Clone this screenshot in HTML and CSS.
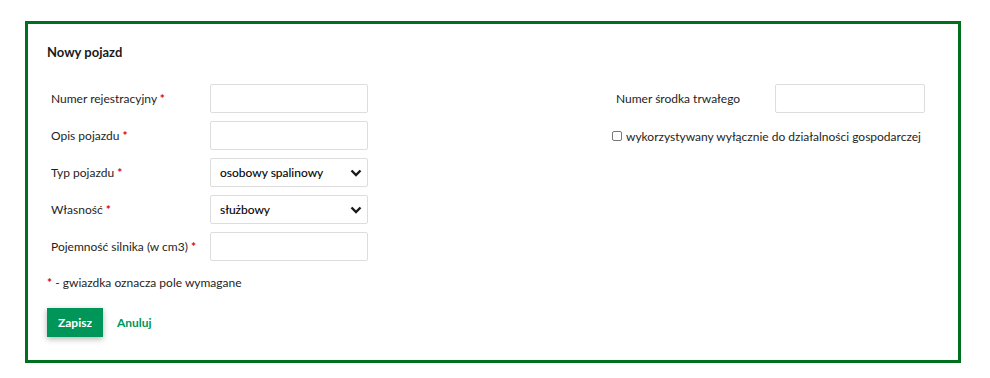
FILE: index.html
```html
<!DOCTYPE html>
<html lang="pl">
  <head>
    <meta charset="UTF-8" />
    <title>Nowy pojazd</title>
    <link rel="stylesheet" href="styles.css">
  </head>
  <body>
    <div class="panel">
      <h4 class="panel-title">Nowy pojazd</h4>

      <div class="columns">
        <div class="form-col">
          <div class="form-row">
            <label class="form-label">Numer rejestracyjny <span class="req">*</span></label>
            <input class="form-input" type="text" />
          </div>
          <div class="form-row">
            <label class="form-label">Opis pojazdu <span class="req">*</span></label>
            <input class="form-input" type="text" />
          </div>
          <div class="form-row">
            <label class="form-label">Typ pojazdu <span class="req">*</span></label>
            <div class="select-wrap">
              <select class="form-input form-select">
                <option>osobowy spalinowy</option>
              </select>
              <svg class="chevron" width="12" height="8" viewBox="0 0 12 8">
                <path d="M1.5 1.5 L6 6 L10.5 1.5" fill="none" stroke="#1a1a1a" stroke-width="2.4" />
              </svg>
            </div>
          </div>
          <div class="form-row">
            <label class="form-label">Własność <span class="req">*</span></label>
            <div class="select-wrap">
              <select class="form-input form-select">
                <option>służbowy</option>
              </select>
              <svg class="chevron" width="12" height="8" viewBox="0 0 12 8">
                <path d="M1.5 1.5 L6 6 L10.5 1.5" fill="none" stroke="#1a1a1a" stroke-width="2.4" />
              </svg>
            </div>
          </div>
          <div class="form-row">
            <label class="form-label">Pojemność silnika (w cm3) <span class="req">*</span></label>
            <input class="form-input" type="text" />
          </div>
        </div>

        <div class="form-col form-col-right">
          <div class="form-row">
            <label class="form-label">Numer środka trwałego</label>
            <input class="form-input form-input-short" type="text" />
          </div>
          <label class="check-row">
            <input class="check" type="checkbox" />
            wykorzystywany wyłącznie do działalności gospodarczej
          </label>
        </div>
      </div>

      <p class="req-note"><span class="req">*</span> - gwiazdka oznacza pole wymagane</p>

      <div class="actions">
        <button class="btn-save">Zapisz</button>
        <a class="btn-cancel" href="#">Anuluj</a>
      </div>
    </div>
  </body>
</html>
```

FILE: styles.css
```css
body {
  margin: 0;
  font-family: Lato, "Noto Sans", sans-serif;
  font-size: 12px;
  color: #1e1e1e;
  background: #fff;
}
.panel {
  box-sizing: border-box;
  width: 936px;
  height: 342px;
  margin: 21px 0 0 25px;
  padding: 20px 19px;
  border: 3px solid #00701f;
}
.panel-title {
  margin: 0 0 24px;
  font-size: 13px;
  line-height: 16px;
  font-weight: bold;
  color: #1a1a1a;
}
.columns {
  display: flex;
}
.form-col {
  width: 565px;
  display: flex;
  flex-direction: column;
  gap: 8px;
}
.form-col-right {
  width: auto;
  gap: 16px;
}
.form-row {
  display: flex;
  align-items: center;
  padding-left: 4px;
}
.form-label {
  width: 159px;
  flex: none;
}
.req {
  color: #e00000;
  font-weight: bold;
}
.form-input {
  box-sizing: border-box;
  width: 158px;
  height: 29px;
  margin: 0;
  padding: 0 9px;
  border: 1px solid #ddd;
  border-radius: 2px;
  background: #fff;
  font-family: inherit;
  font-size: 12px;
  color: #000;
}
.form-input-short {
  width: 150px;
}
.select-wrap {
  position: relative;
}
.form-select {
  appearance: none;
  -webkit-appearance: none;
  -webkit-text-stroke: 0.1px #000;
}
.chevron {
  position: absolute;
  right: 6px;
  top: 11px;
  pointer-events: none;
}
.check-row {
  display: flex;
  align-items: center;
  gap: 4px;
}
.check {
  appearance: none;
  -webkit-appearance: none;
  box-sizing: border-box;
  width: 10px;
  height: 10px;
  margin: 0 0 2px;
  border: 1px solid #777;
  border-radius: 2px;
  background: #fff;
}
.req-note {
  margin: 14px 0 0;
  line-height: 16px;
}
.actions {
  display: flex;
  align-items: center;
  gap: 14px;
  margin-top: 17px;
}
.btn-save {
  width: 56px;
  height: 29px;
  border: none;
  background: #00965a;
  color: #fff;
  font-family: inherit;
  font-size: 12px;
  font-weight: bold;
  box-shadow: 0 2px 6px rgba(0, 0, 0, 0.3);
  cursor: pointer;
}
.btn-cancel {
  color: #00965a;
  font-weight: bold;
  text-decoration: none;
}
```
